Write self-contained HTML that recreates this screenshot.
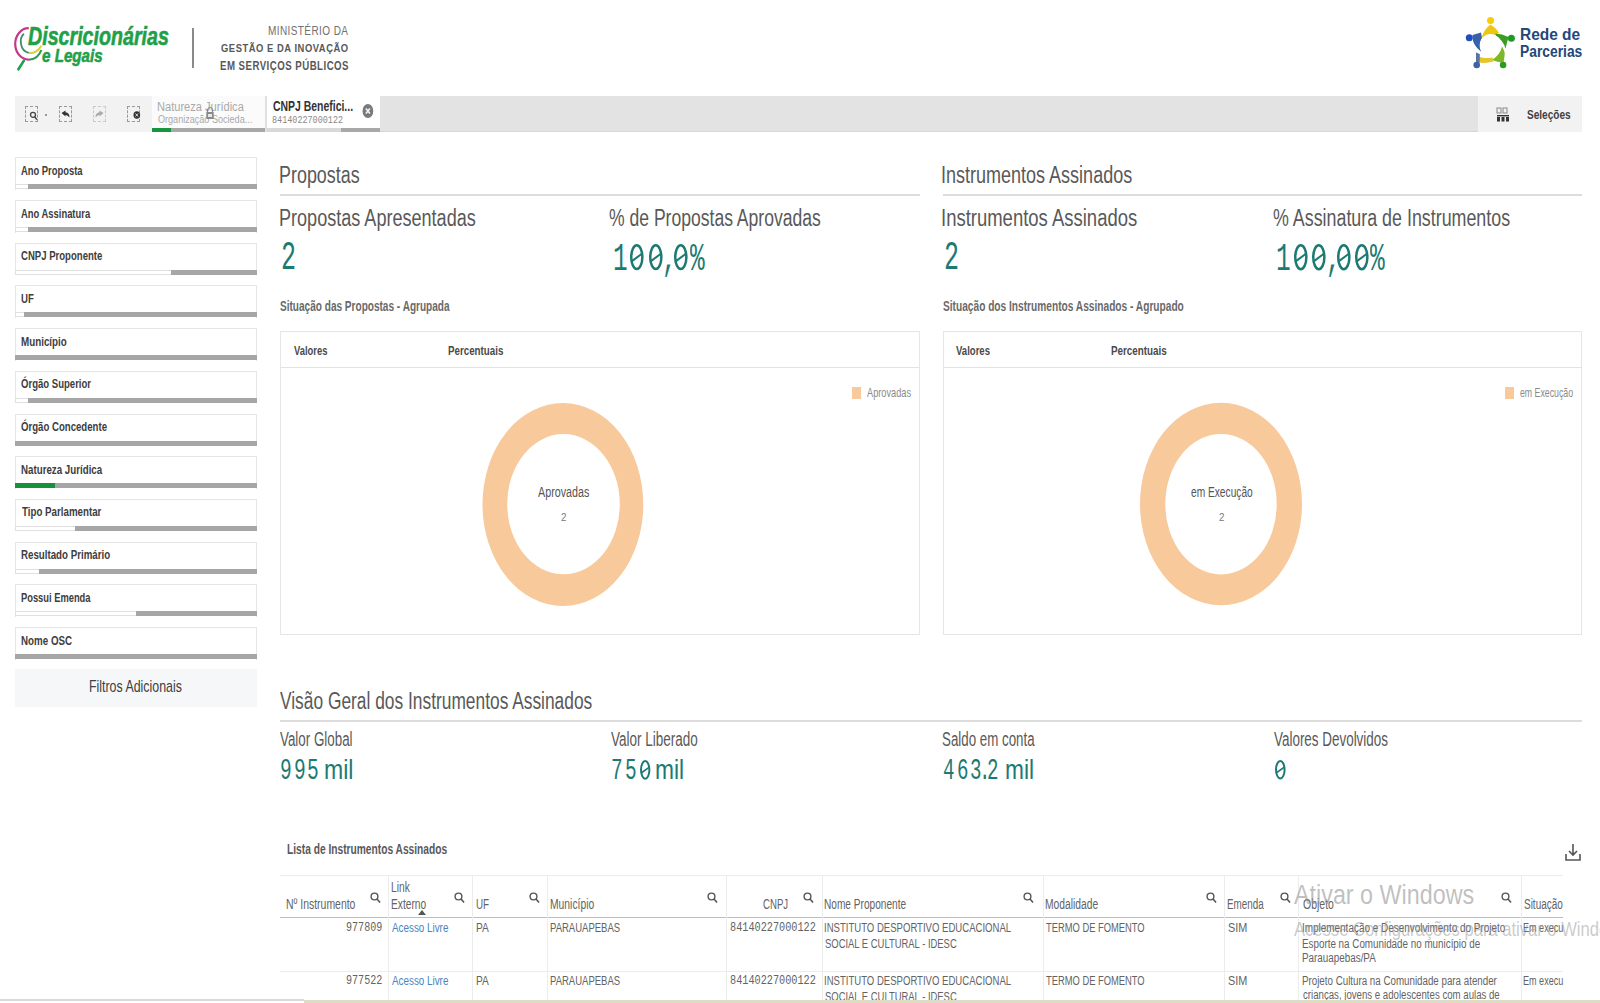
<!DOCTYPE html>
<html><head><meta charset="utf-8"><style>
html,body{margin:0;padding:0;width:1600px;height:1003px;overflow:hidden;background:#fff;}
body{position:relative;font-family:"Liberation Sans",sans-serif;}
.t{position:absolute;white-space:nowrap;transform-origin:0 0;}
.r{position:absolute;box-sizing:border-box;}
svg{position:absolute;}
</style></head><body>
<svg style="left:10px;top:24px" width="40" height="50" viewBox="0 0 40 50">
<path d="M18.8 4.2 A13.3 15.7 0 1 0 20 35.5" fill="none" stroke="#c2388a" stroke-width="2.2"/>
<path d="M20 35.5 A13.3 15.7 0 0 0 31.3 26" fill="none" stroke="#2e9a5e" stroke-width="2.2"/>
<path d="M13.9 9.7 C9 14 9.5 27 18.8 28.9" fill="none" stroke="#3a8f6a" stroke-width="1.8"/>
<path d="M18.8 28.9 C24 30 29 26 31.4 21.8" fill="none" stroke="#d6d23a" stroke-width="2"/>
<path d="M13.9 36.6 L8.4 45.3" stroke="#22a04b" stroke-width="2.6" stroke-linecap="round"/>
</svg>
<div class="t" style="left:27.71px;top:23.25px;font:italic bold 26.16px/26.16px 'Liberation Sans';color:#1fa049;transform:scaleX(0.7510);-webkit-text-stroke:0.6px #1fa049">Discricionárias</div>
<div class="t" style="left:41.55px;top:47.40px;font:italic bold 18.90px/18.90px 'Liberation Sans';color:#1fa049;transform:scaleX(0.8019);-webkit-text-stroke:0.6px #1fa049">e Legais</div>
<div class="r" style="left:192px;top:28px;width:1.6px;height:40px;background:#8a8a8a;"></div>
<div class="t" style="left:268.00px;top:24.86px;font:normal normal 12.21px/12.21px 'Liberation Sans';color:#707070;transform:scaleX(0.8199);letter-spacing:0.50px;">MINISTÉRIO DA</div>
<div class="t" style="left:221.22px;top:43.12px;font:normal bold 10.61px/10.61px 'Liberation Sans';color:#585858;transform:scaleX(0.8861);letter-spacing:0.60px;">GESTÃO E DA INOVAÇÃO</div>
<div class="t" style="left:219.77px;top:59.76px;font:normal bold 12.21px/12.21px 'Liberation Sans';color:#585858;transform:scaleX(0.7915);letter-spacing:0.60px;">EM SERVIÇOS PÚBLICOS</div>
<svg style="left:1462px;top:14px" width="58" height="58" viewBox="0 0 58 58">
<path d="M28.5 10.5 Q33 13 37 18.5 L33 21 Q26 20 19.5 24 Q22 15 28.5 10.5 Z" fill="#ecc815"/>
<circle cx="28.5" cy="6.6" r="3.5" fill="#f5cd0a"/>
<path d="M10.5 21 L19 18.5 L20 24 Q16.5 30 19.5 38 Q13 33 11 27 Z" fill="#3562a8"/>
<circle cx="7.3" cy="23.7" r="3.5" fill="#1f4fbf"/>
<path d="M33.5 19.5 Q40 19.5 46.5 23 L43.5 34.5 Q41 26 33.5 21.5 Z" fill="#3d9d22"/>
<circle cx="49.4" cy="24.3" r="3.5" fill="#1f9a24"/>
<path d="M40 32.5 Q43.5 38 42.5 42 L41.5 49 Q35 48 30 46 Q38 41 40 32.5 Z" fill="#7db828"/>
<circle cx="41.1" cy="51" r="3.3" fill="#2f9a22"/>
<path d="M16.5 42.5 Q23 45 30.5 43.5 L31.5 47.5 Q25 49 18.5 49 Z" fill="#e5c42a"/>
<path d="M14 38.5 L17.8 40 L17.8 48.8 L14 48.8 Z" fill="#5676a0"/>
<circle cx="14.7" cy="51" r="3.3" fill="#3d62a6"/>
<ellipse cx="28.5" cy="31.5" rx="10.8" ry="11.5" fill="#fff"/>
</svg>
<div class="t" style="left:1519.99px;top:27.35px;font:normal bold 16.72px/16.72px 'Liberation Sans';color:#24477a;transform:scaleX(0.9254);">Rede de</div>
<div class="t" style="left:1520.10px;top:43.29px;font:normal bold 16.42px/16.42px 'Liberation Sans';color:#24477a;transform:scaleX(0.8431);">Parcerias</div>
<div class="r" style="left:15px;top:96px;width:1567px;height:36px;background:#e3e3e3;"></div>
<div class="r" style="left:15px;top:96px;width:137px;height:36px;background:#f2f2f2;"></div>
<div class="r" style="left:1478px;top:96px;width:104px;height:36px;background:#f2f2f2;"></div>
<div class="r" style="left:380px;top:130.5px;width:1098px;height:1.5px;background:#d6d6d6;"></div>
<div class="r" style="left:152px;top:96px;width:113px;height:36px;background:#fbfbfb;"></div>
<div class="r" style="left:267px;top:96px;width:113px;height:36px;background:#ffffff;"></div>
<div class="r" style="left:152px;top:128px;width:113px;height:3.6px;background:#a8a8a8;"></div>
<div class="r" style="left:152px;top:128px;width:19px;height:3.6px;background:#17963f;"></div>
<div class="r" style="left:267px;top:128px;width:74px;height:3.6px;background:#d9d9d9;"></div>
<div class="r" style="left:341px;top:128px;width:39px;height:3.6px;background:#a8a8a8;"></div>
<div class="r" style="left:265px;top:96px;width:2px;height:36px;background:#e0e0e0;"></div>
<div class="r" style="left:25px;top:106px;width:13px;height:15.5px;border:1.6px dashed #8a8a8a;opacity:0.85"></div>
<div class="r" style="left:59px;top:106px;width:13px;height:15.5px;border:1.6px dashed #8a8a8a;opacity:0.85"></div>
<div class="r" style="left:93px;top:106px;width:13px;height:15.5px;border:1.6px dashed #c4c4c4;opacity:0.85"></div>
<div class="r" style="left:127px;top:106px;width:13px;height:15.5px;border:1.6px dashed #8a8a8a;opacity:0.85"></div>
<svg style="left:28px;top:109px" width="10" height="12"><circle cx="5" cy="5.8" r="2.5" fill="none" stroke="#444" stroke-width="1.3"/><path d="M6.6 7.6 L8.8 10.6" stroke="#444" stroke-width="1.5"/></svg>
<div class="r" style="left:45px;top:113.5px;width:2px;height:2px;background:#999;"></div>
<svg style="left:60px;top:109px" width="11" height="10"><path d="M1.5 4 L5.5 1.5 L5.5 3.3 Q9.5 3.5 9.5 8.5 Q7.5 5.8 5.5 6 L5.5 7.5 Z" fill="#333"/></svg>
<svg style="left:94px;top:109px" width="11" height="10"><path d="M9.5 4 L5.5 1.5 L5.5 3.3 Q1.5 3.5 1.5 8.5 Q3.5 5.8 5.5 6 L5.5 7.5 Z" fill="#aaa"/></svg>
<svg style="left:131px;top:110px" width="11" height="10"><ellipse cx="5.8" cy="5" rx="3.3" ry="3.8" fill="#333"/><path d="M4.5 3.5 L7.1 6.5 M7.1 3.5 L4.5 6.5" stroke="#ddd" stroke-width="1"/></svg>
<div class="t" style="left:157.11px;top:100.33px;font:normal normal 13.66px/13.66px 'Liberation Sans';color:#a9a9a9;transform:scaleX(0.8111);">Natureza Jurídica</div>
<div class="t" style="left:157.59px;top:114.25px;font:normal normal 11.05px/11.05px 'Liberation Sans';color:#a9a9a9;transform:scaleX(0.8206);">Organização Socieda...</div>
<svg style="left:205px;top:104px" width="10" height="20"><path d="M2.5 8 L2.5 5.5 Q5 1 7.5 5.5 L7.5 8" fill="none" stroke="#8a8a8a" stroke-width="1.2"/><rect x="1.3" y="8" width="7.4" height="7" fill="#8a8a8a"/><rect x="3" y="10" width="4" height="3" fill="#e8e8e8"/></svg>
<div class="t" style="left:272.58px;top:100.31px;font:normal bold 13.81px/13.81px 'Liberation Sans';color:#333333;transform:scaleX(0.7568);">CNPJ Benefici...</div>
<div class="t" style="left:272.49px;top:115.47px;font:normal normal 10.61px/10.61px 'Liberation Mono';color:#8a8a8a;transform:scaleX(0.7976);">84140227000122</div>
<svg style="left:361px;top:103px" width="14" height="16"><ellipse cx="6.9" cy="8" rx="5.4" ry="7" fill="#7a7a7a"/><path d="M4.9 5.6 L8.9 10.4 M8.9 5.6 L4.9 10.4" stroke="#f4f4f4" stroke-width="1.6"/></svg>
<svg style="left:1496px;top:107px" width="14" height="16"><rect x="1" y="1" width="4" height="5" fill="none" stroke="#888" stroke-width="1"/><rect x="7" y="1" width="4" height="5" fill="none" stroke="#888" stroke-width="1"/><rect x="1" y="8" width="12" height="1.4" fill="#333"/><rect x="1" y="10" width="3" height="4.5" fill="#333"/><rect x="5.5" y="10" width="3" height="4.5" fill="#333"/><rect x="10" y="10" width="3" height="4.5" fill="#333"/></svg>
<div class="t" style="left:1526.75px;top:107.55px;font:normal bold 13.52px/13.52px 'Liberation Sans';color:#404040;transform:scaleX(0.7441);">Seleções</div>
<div class="r" style="left:15px;top:157.3px;width:242px;height:32.5px;border:1.6px solid #e6e6e6;border-bottom:none;background:#fff"></div>
<div class="r" style="left:15px;top:184.3px;width:242px;height:5px;background:#a6a6a6;"></div>
<div class="r" style="left:15px;top:184.3px;width:13.4px;height:5px;background:#fff;border:1px solid #e0e0e0;border-right:none"></div>
<div class="t" style="left:21.37px;top:164.87px;font:normal bold 12.79px/12.79px 'Liberation Sans';color:#3d3d3d;transform:scaleX(0.7340);">Ano Proposta</div>
<div class="r" style="left:15px;top:200.0px;width:242px;height:32.5px;border:1.6px solid #e6e6e6;border-bottom:none;background:#fff"></div>
<div class="r" style="left:15px;top:227.0px;width:242px;height:5px;background:#a6a6a6;"></div>
<div class="r" style="left:15px;top:227.0px;width:12.5px;height:5px;background:#fff;border:1px solid #e0e0e0;border-right:none"></div>
<div class="t" style="left:21.36px;top:207.57px;font:normal bold 12.79px/12.79px 'Liberation Sans';color:#3d3d3d;transform:scaleX(0.7355);">Ano Assinatura</div>
<div class="r" style="left:15px;top:242.7px;width:242px;height:32.5px;border:1.6px solid #e6e6e6;border-bottom:none;background:#fff"></div>
<div class="r" style="left:15px;top:269.7px;width:242px;height:5px;background:#a6a6a6;"></div>
<div class="r" style="left:15px;top:269.7px;width:155.5px;height:5px;background:#fff;border:1px solid #e0e0e0;border-right:none"></div>
<div class="t" style="left:21.22px;top:250.27px;font:normal bold 12.79px/12.79px 'Liberation Sans';color:#3d3d3d;transform:scaleX(0.7484);">CNPJ Proponente</div>
<div class="r" style="left:15px;top:285.4px;width:242px;height:32.5px;border:1.6px solid #e6e6e6;border-bottom:none;background:#fff"></div>
<div class="r" style="left:15px;top:312.4px;width:242px;height:5px;background:#a6a6a6;"></div>
<div class="r" style="left:15px;top:312.4px;width:9.0px;height:5px;background:#fff;border:1px solid #e0e0e0;border-right:none"></div>
<div class="t" style="left:21.02px;top:292.97px;font:normal bold 12.79px/12.79px 'Liberation Sans';color:#3d3d3d;transform:scaleX(0.7533);">UF</div>
<div class="r" style="left:15px;top:328.1px;width:242px;height:32.5px;border:1.6px solid #e6e6e6;border-bottom:none;background:#fff"></div>
<div class="r" style="left:15px;top:355.1px;width:242px;height:5px;background:#a6a6a6;"></div>
<div class="t" style="left:20.96px;top:335.67px;font:normal bold 12.79px/12.79px 'Liberation Sans';color:#3d3d3d;transform:scaleX(0.7673);">Município</div>
<div class="r" style="left:15px;top:370.8px;width:242px;height:32.5px;border:1.6px solid #e6e6e6;border-bottom:none;background:#fff"></div>
<div class="r" style="left:15px;top:397.8px;width:242px;height:5px;background:#a6a6a6;"></div>
<div class="r" style="left:15px;top:397.8px;width:12.5px;height:5px;background:#fff;border:1px solid #e0e0e0;border-right:none"></div>
<div class="t" style="left:21.22px;top:378.37px;font:normal bold 12.79px/12.79px 'Liberation Sans';color:#3d3d3d;transform:scaleX(0.7475);">Órgão Superior</div>
<div class="r" style="left:15px;top:413.5px;width:242px;height:32.5px;border:1.6px solid #e6e6e6;border-bottom:none;background:#fff"></div>
<div class="r" style="left:15px;top:440.5px;width:242px;height:5px;background:#a6a6a6;"></div>
<div class="t" style="left:21.22px;top:421.07px;font:normal bold 12.79px/12.79px 'Liberation Sans';color:#3d3d3d;transform:scaleX(0.7523);">Órgão Concedente</div>
<div class="r" style="left:15px;top:456.2px;width:242px;height:32.5px;border:1.6px solid #e6e6e6;border-bottom:none;background:#fff"></div>
<div class="r" style="left:15px;top:483.2px;width:242px;height:5px;background:#a6a6a6;"></div>
<div class="r" style="left:15px;top:483.2px;width:40px;height:5px;background:#17913c;"></div>
<div class="t" style="left:20.97px;top:463.77px;font:normal bold 12.79px/12.79px 'Liberation Sans';color:#3d3d3d;transform:scaleX(0.7620);">Natureza Jurídica</div>
<div class="r" style="left:15px;top:498.9px;width:242px;height:32.5px;border:1.6px solid #e6e6e6;border-bottom:none;background:#fff"></div>
<div class="r" style="left:15px;top:525.9px;width:242px;height:5px;background:#a6a6a6;"></div>
<div class="r" style="left:15px;top:525.9px;width:60.0px;height:5px;background:#fff;border:1px solid #e0e0e0;border-right:none"></div>
<div class="t" style="left:21.50px;top:506.47px;font:normal bold 12.79px/12.79px 'Liberation Sans';color:#3d3d3d;transform:scaleX(0.7621);">Tipo Parlamentar</div>
<div class="r" style="left:15px;top:541.6px;width:242px;height:32.5px;border:1.6px solid #e6e6e6;border-bottom:none;background:#fff"></div>
<div class="r" style="left:15px;top:568.6px;width:242px;height:5px;background:#a6a6a6;"></div>
<div class="r" style="left:15px;top:568.6px;width:24.0px;height:5px;background:#fff;border:1px solid #e0e0e0;border-right:none"></div>
<div class="t" style="left:20.97px;top:549.17px;font:normal bold 12.79px/12.79px 'Liberation Sans';color:#3d3d3d;transform:scaleX(0.7603);">Resultado Primário</div>
<div class="r" style="left:15px;top:584.3px;width:242px;height:32.5px;border:1.6px solid #e6e6e6;border-bottom:none;background:#fff"></div>
<div class="r" style="left:15px;top:611.3px;width:242px;height:5px;background:#a6a6a6;"></div>
<div class="r" style="left:15px;top:611.3px;width:120.5px;height:5px;background:#fff;border:1px solid #e0e0e0;border-right:none"></div>
<div class="t" style="left:20.99px;top:591.87px;font:normal bold 12.79px/12.79px 'Liberation Sans';color:#3d3d3d;transform:scaleX(0.7300);">Possui Emenda</div>
<div class="r" style="left:15px;top:627.0px;width:242px;height:32.5px;border:1.6px solid #e6e6e6;border-bottom:none;background:#fff"></div>
<div class="r" style="left:15px;top:654.0px;width:242px;height:5px;background:#a6a6a6;"></div>
<div class="t" style="left:20.96px;top:634.57px;font:normal bold 12.79px/12.79px 'Liberation Sans';color:#3d3d3d;transform:scaleX(0.7651);">Nome OSC</div>
<div class="r" style="left:15px;top:669px;width:242px;height:37.5px;background:#f6f7f8;"></div>
<div class="t" style="left:88.51px;top:679.46px;font:normal normal 15.99px/15.99px 'Liberation Sans';color:#404040;transform:scaleX(0.7744);">Filtros Adicionais</div>
<div class="t" style="left:278.57px;top:163.49px;font:normal normal 23.98px/23.98px 'Liberation Sans';color:#595959;transform:scaleX(0.7475);">Propostas</div>
<div class="r" style="left:280px;top:194px;width:640px;height:1.5px;background:#dcdcdc;"></div>
<div class="t" style="left:279.35px;top:205.59px;font:normal normal 23.98px/23.98px 'Liberation Sans';color:#595959;transform:scaleX(0.7535);">Propostas Apresentadas</div>
<div class="t" style="left:609.39px;top:205.59px;font:normal normal 23.98px/23.98px 'Liberation Sans';color:#595959;transform:scaleX(0.7324);">% de Propostas Aprovadas</div>
<div class="t" style="left:281.05px;top:239.31px;font:normal normal 40.06px/40.06px 'Liberation Mono';color:#1d7a73;transform:scaleX(0.6241);">2</div>
<div class="t" style="left:612.89px;top:239.78px;font:normal normal 39.31px/39.31px 'Liberation Mono';color:#1d7a73;transform:scaleX(0.6200)">1</div>
<svg style="left:628.40px;top:241.60px;overflow:visible" width="17.60" height="30.30" viewBox="628.40 241.60 17.60 30.30"><ellipse cx="637.20" cy="256.75" rx="5.55" ry="11.90" fill="none" stroke="#1d7a73" stroke-width="2.50"/><path d="M632.03 260.96 L642.64 253.07" stroke="#1d7a73" stroke-width="2.00"/></svg>
<svg style="left:647.00px;top:241.60px;overflow:visible" width="17.60" height="30.30" viewBox="647.00 241.60 17.60 30.30"><ellipse cx="655.80" cy="256.75" rx="5.55" ry="11.90" fill="none" stroke="#1d7a73" stroke-width="2.50"/><path d="M650.63 260.96 L661.24 253.07" stroke="#1d7a73" stroke-width="2.00"/></svg>
<div class="t" style="left:662.25px;top:239.78px;font:normal normal 39.31px/39.31px 'Liberation Mono';color:#1d7a73;transform:scaleX(0.6200)">,</div>
<svg style="left:671.50px;top:241.60px;overflow:visible" width="17.60" height="30.30" viewBox="671.50 241.60 17.60 30.30"><ellipse cx="680.30" cy="256.75" rx="5.55" ry="11.90" fill="none" stroke="#1d7a73" stroke-width="2.50"/><path d="M675.13 260.96 L685.74 253.07" stroke="#1d7a73" stroke-width="2.00"/></svg>
<div class="t" style="left:689.60px;top:239.78px;font:normal normal 39.31px/39.31px 'Liberation Mono';color:#1d7a73;transform:scaleX(0.6200)">%</div>
<div class="t" style="left:279.75px;top:298.20px;font:normal bold 15.12px/15.12px 'Liberation Sans';color:#6a6a6a;transform:scaleX(0.6659);">Situação das Propostas - Agrupada</div>
<div class="r" style="left:280px;top:331px;width:640px;height:304px;border:1.5px solid #e6e6e6"></div>
<div class="r" style="left:281px;top:366.6px;width:638px;height:1.2px;background:#e3e3e3;"></div>
<div class="t" style="left:293.95px;top:343.83px;font:normal bold 13.66px/13.66px 'Liberation Sans';color:#4a4a4a;transform:scaleX(0.6871);">Valores</div>
<div class="t" style="left:447.97px;top:343.83px;font:normal bold 13.66px/13.66px 'Liberation Sans';color:#4a4a4a;transform:scaleX(0.7148);">Percentuais</div>
<svg style="left:470px;top:395px" width="190" height="220"><ellipse cx="93" cy="109.5" rx="68.35" ry="85.75" fill="none" stroke="#f8c99b" stroke-width="0" /></svg>
<svg style="left:0;top:0" width="1600" height="1003"><path fill-rule="evenodd" fill="#f8c99b" d="M482.5 504.5 a80.4 101.5 0 1 0 160.8 0 a80.4 101.5 0 1 0 -160.8 0 Z M507.2 504.2 a56.3 70.1 0 1 0 112.6 0 a56.3 70.1 0 1 0 -112.6 0 Z"/><path fill-rule="evenodd" fill="#f8c99b" d="M1140 504 a81 101.3 0 1 0 162 0 a81 101.3 0 1 0 -162 0 Z M1165.3 504.2 a55.7 70.2 0 1 0 111.4 0 a55.7 70.2 0 1 0 -111.4 0 Z"/></svg>
<div class="r" style="left:851.7px;top:387.3px;width:9px;height:11.5px;background:#f8c99b;"></div>
<div class="t" style="left:867.00px;top:387.04px;font:normal normal 12.35px/12.35px 'Liberation Sans';color:#8a8a8a;transform:scaleX(0.7454);">Aprovadas</div>
<div class="t" style="left:538.00px;top:485.19px;font:normal normal 14.53px/14.53px 'Liberation Sans';color:#555555;transform:scaleX(0.7395);">Aprovadas</div>
<div class="t" style="left:561.01px;top:513.39px;font:normal normal 10.17px/10.17px 'Liberation Sans';color:#777777;transform:scaleX(0.9615);">2</div>
<div class="t" style="left:941.38px;top:163.49px;font:normal normal 23.98px/23.98px 'Liberation Sans';color:#595959;transform:scaleX(0.7513);">Instrumentos Assinados</div>
<div class="r" style="left:943px;top:194px;width:639px;height:1.5px;background:#dcdcdc;"></div>
<div class="t" style="left:941.34px;top:205.59px;font:normal normal 23.98px/23.98px 'Liberation Sans';color:#595959;transform:scaleX(0.7711);">Instrumentos Assinados</div>
<div class="t" style="left:1273.37px;top:205.59px;font:normal normal 23.98px/23.98px 'Liberation Sans';color:#595959;transform:scaleX(0.7446);">% Assinatura de Instrumentos</div>
<div class="t" style="left:943.75px;top:239.31px;font:normal normal 40.06px/40.06px 'Liberation Mono';color:#1d7a73;transform:scaleX(0.6241);">2</div>
<div class="t" style="left:1276.29px;top:239.67px;font:normal normal 39.46px/39.46px 'Liberation Mono';color:#1d7a73;transform:scaleX(0.6200)">1</div>
<svg style="left:1291.80px;top:241.50px;overflow:visible" width="17.60" height="30.40" viewBox="1291.80 241.50 17.60 30.40"><ellipse cx="1300.60" cy="256.70" rx="5.55" ry="11.95" fill="none" stroke="#1d7a73" stroke-width="2.50"/><path d="M1295.43 260.92 L1306.04 253.00" stroke="#1d7a73" stroke-width="2.00"/></svg>
<svg style="left:1310.10px;top:241.50px;overflow:visible" width="17.60" height="30.40" viewBox="1310.10 241.50 17.60 30.40"><ellipse cx="1318.90" cy="256.70" rx="5.55" ry="11.95" fill="none" stroke="#1d7a73" stroke-width="2.50"/><path d="M1313.73 260.92 L1324.34 253.00" stroke="#1d7a73" stroke-width="2.00"/></svg>
<div class="t" style="left:1325.74px;top:239.67px;font:normal normal 39.46px/39.46px 'Liberation Mono';color:#1d7a73;transform:scaleX(0.6200)">,</div>
<svg style="left:1334.50px;top:241.50px;overflow:visible" width="17.60" height="30.40" viewBox="1334.50 241.50 17.60 30.40"><ellipse cx="1343.30" cy="256.70" rx="5.55" ry="11.95" fill="none" stroke="#1d7a73" stroke-width="2.50"/><path d="M1338.13 260.92 L1348.74 253.00" stroke="#1d7a73" stroke-width="2.00"/></svg>
<svg style="left:1352.80px;top:241.50px;overflow:visible" width="17.60" height="30.40" viewBox="1352.80 241.50 17.60 30.40"><ellipse cx="1361.60" cy="256.70" rx="5.55" ry="11.95" fill="none" stroke="#1d7a73" stroke-width="2.50"/><path d="M1356.43 260.92 L1367.04 253.00" stroke="#1d7a73" stroke-width="2.00"/></svg>
<div class="t" style="left:1370.20px;top:239.67px;font:normal normal 39.46px/39.46px 'Liberation Mono';color:#1d7a73;transform:scaleX(0.6200)">%</div>
<div class="t" style="left:942.75px;top:298.20px;font:normal bold 15.12px/15.12px 'Liberation Sans';color:#6a6a6a;transform:scaleX(0.6723);">Situação dos Instrumentos Assinados - Agrupado</div>
<div class="r" style="left:943px;top:331px;width:639px;height:304px;border:1.5px solid #e6e6e6"></div>
<div class="r" style="left:944px;top:366.6px;width:637px;height:1.2px;background:#e3e3e3;"></div>
<div class="t" style="left:956.35px;top:343.83px;font:normal bold 13.66px/13.66px 'Liberation Sans';color:#4a4a4a;transform:scaleX(0.6996);">Valores</div>
<div class="t" style="left:1110.66px;top:343.83px;font:normal bold 13.66px/13.66px 'Liberation Sans';color:#4a4a4a;transform:scaleX(0.7188);">Percentuais</div>
<div class="r" style="left:1504.5px;top:387.3px;width:9px;height:11.5px;background:#f8c99b;"></div>
<div class="t" style="left:1520.05px;top:387.04px;font:normal normal 12.35px/12.35px 'Liberation Sans';color:#8a8a8a;transform:scaleX(0.7093);">em Execução</div>
<div class="t" style="left:1190.59px;top:485.19px;font:normal normal 14.53px/14.53px 'Liberation Sans';color:#555555;transform:scaleX(0.7018);">em Execução</div>
<div class="t" style="left:1219.01px;top:513.39px;font:normal normal 10.17px/10.17px 'Liberation Sans';color:#777777;transform:scaleX(0.9615);">2</div>
<div class="t" style="left:280.00px;top:688.89px;font:normal normal 23.98px/23.98px 'Liberation Sans';color:#595959;transform:scaleX(0.7241);">Visão Geral dos Instrumentos Assinados</div>
<div class="r" style="left:280px;top:720px;width:1302px;height:1.5px;background:#dcdcdc;"></div>
<div class="t" style="left:280.00px;top:729.56px;font:normal normal 19.77px/19.77px 'Liberation Sans';color:#595959;transform:scaleX(0.6761);">Valor Global</div>
<div class="t" style="left:610.80px;top:729.56px;font:normal normal 19.77px/19.77px 'Liberation Sans';color:#595959;transform:scaleX(0.6824);">Valor Liberado</div>
<div class="t" style="left:942.00px;top:729.56px;font:normal normal 19.77px/19.77px 'Liberation Sans';color:#595959;transform:scaleX(0.6743);">Saldo em conta</div>
<div class="t" style="left:1274.20px;top:729.56px;font:normal normal 19.77px/19.77px 'Liberation Sans';color:#595959;transform:scaleX(0.6795);">Valores Devolvidos</div>
<div class="t" style="left:280.23px;top:756.93px;font:normal normal 29.60px/29.60px 'Liberation Mono';color:#1d7a73;transform:scaleX(0.6600)">9</div>
<div class="t" style="left:293.73px;top:756.93px;font:normal normal 29.60px/29.60px 'Liberation Mono';color:#1d7a73;transform:scaleX(0.6600)">9</div>
<div class="t" style="left:307.03px;top:756.93px;font:normal normal 29.60px/29.60px 'Liberation Mono';color:#1d7a73;transform:scaleX(0.6600)">5</div>
<div class="t" style="left:323.50px;top:756.90px;font:normal normal 26.82px/26.82px 'Liberation Sans';color:#1d7a73;transform:scaleX(0.8593);">mil</div>
<div class="t" style="left:611.14px;top:757.04px;font:normal normal 29.45px/29.45px 'Liberation Mono';color:#1d7a73;transform:scaleX(0.6600)">7</div>
<div class="t" style="left:625.23px;top:757.04px;font:normal normal 29.45px/29.45px 'Liberation Mono';color:#1d7a73;transform:scaleX(0.6600)">5</div>
<svg style="left:637.60px;top:757.90px;overflow:visible" width="14.40" height="23.70" viewBox="637.60 757.90 14.40 23.70"><ellipse cx="644.80" cy="769.75" rx="4.20" ry="8.85" fill="none" stroke="#1d7a73" stroke-width="2.00"/><path d="M640.85 772.90 L648.96 766.99" stroke="#1d7a73" stroke-width="1.60"/></svg>
<div class="t" style="left:655.22px;top:756.90px;font:normal normal 26.82px/26.82px 'Liberation Sans';color:#1d7a73;transform:scaleX(0.8496);">mil</div>
<div class="t" style="left:943.04px;top:757.18px;font:normal normal 29.00px/29.00px 'Liberation Mono';color:#1d7a73;transform:scaleX(0.6600)">4</div>
<div class="t" style="left:957.06px;top:757.18px;font:normal normal 29.00px/29.00px 'Liberation Mono';color:#1d7a73;transform:scaleX(0.6600)">6</div>
<div class="t" style="left:969.65px;top:757.18px;font:normal normal 29.00px/29.00px 'Liberation Mono';color:#1d7a73;transform:scaleX(0.6600)">3</div>
<div class="t" style="left:979.31px;top:757.18px;font:normal normal 29.00px/29.00px 'Liberation Mono';color:#1d7a73;transform:scaleX(0.6600)">.</div>
<div class="t" style="left:987.06px;top:757.18px;font:normal normal 29.00px/29.00px 'Liberation Mono';color:#1d7a73;transform:scaleX(0.6600)">2</div>
<div class="t" style="left:1004.72px;top:756.70px;font:normal normal 26.82px/26.82px 'Liberation Sans';color:#1d7a73;transform:scaleX(0.8464);">mil</div>
<svg style="left:1272.50px;top:758.00px;overflow:visible" width="14.60" height="23.40" viewBox="1272.50 758.00 14.60 23.40"><ellipse cx="1279.80" cy="769.70" rx="4.30" ry="8.70" fill="none" stroke="#1d7a73" stroke-width="2.00"/><path d="M1275.77 772.80 L1284.04 766.98" stroke="#1d7a73" stroke-width="1.60"/></svg>
<div class="t" style="left:286.84px;top:841.38px;font:normal bold 15.26px/15.26px 'Liberation Sans';color:#595959;transform:scaleX(0.6695);">Lista de Instrumentos Assinados</div>
<svg style="left:1564px;top:843px" width="18" height="20"><path d="M9 1 L9 12 M5 8 L9 12 L13 8 M2 11 L2 17 L16 17 L16 11" fill="none" stroke="#555" stroke-width="1.6"/></svg>
<div class="r" style="left:280px;top:875px;width:1283px;height:1px;background:#ececec;"></div>
<div class="r" style="left:280px;top:916.8px;width:1283px;height:1.5px;background:#bdbdbd;"></div>
<div class="r" style="left:280px;top:970.8px;width:1283px;height:1px;background:#ececec;"></div>
<div class="r" style="left:388px;top:876px;width:1px;height:127px;background:#ececec;"></div>
<div class="r" style="left:472.3px;top:876px;width:1px;height:127px;background:#ececec;"></div>
<div class="r" style="left:547.2px;top:876px;width:1px;height:127px;background:#ececec;"></div>
<div class="r" style="left:725.7px;top:876px;width:1px;height:127px;background:#ececec;"></div>
<div class="r" style="left:822.3px;top:876px;width:1px;height:127px;background:#ececec;"></div>
<div class="r" style="left:1043px;top:876px;width:1px;height:127px;background:#ececec;"></div>
<div class="r" style="left:1224.4px;top:876px;width:1px;height:127px;background:#ececec;"></div>
<div class="r" style="left:1298.4px;top:876px;width:1px;height:127px;background:#ececec;"></div>
<div class="r" style="left:1520.5px;top:876px;width:1px;height:127px;background:#ececec;"></div>
<div class="t" style="left:285.96px;top:897.61px;font:normal normal 13.81px/13.81px 'Liberation Sans';color:#636363;transform:scaleX(0.7570);">Nº Instrumento</div>
<div class="t" style="left:476.26px;top:897.61px;font:normal normal 13.81px/13.81px 'Liberation Sans';color:#636363;transform:scaleX(0.7123);">UF</div>
<div class="t" style="left:550.17px;top:897.61px;font:normal normal 13.81px/13.81px 'Liberation Sans';color:#636363;transform:scaleX(0.7486);">Município</div>
<div class="t" style="left:762.52px;top:897.61px;font:normal normal 13.81px/13.81px 'Liberation Sans';color:#636363;transform:scaleX(0.6980);">CNPJ</div>
<div class="t" style="left:824.19px;top:897.61px;font:normal normal 13.81px/13.81px 'Liberation Sans';color:#636363;transform:scaleX(0.7337);">Nome Proponente</div>
<div class="t" style="left:1045.18px;top:897.61px;font:normal normal 13.81px/13.81px 'Liberation Sans';color:#636363;transform:scaleX(0.7457);">Modalidade</div>
<div class="t" style="left:1227.21px;top:897.61px;font:normal normal 13.81px/13.81px 'Liberation Sans';color:#636363;transform:scaleX(0.7143);">Emenda</div>
<div class="t" style="left:1302.53px;top:897.61px;font:normal normal 13.81px/13.81px 'Liberation Sans';color:#636363;transform:scaleX(0.7597);">Objeto</div>
<div class="t" style="left:1523.55px;top:897.61px;font:normal normal 13.81px/13.81px 'Liberation Sans';color:#636363;transform:scaleX(0.7233);">Situação</div>
<div class="t" style="left:391.18px;top:881.31px;font:normal normal 13.81px/13.81px 'Liberation Sans';color:#636363;transform:scaleX(0.7407);">Link</div>
<div class="t" style="left:391.18px;top:897.61px;font:normal normal 13.81px/13.81px 'Liberation Sans';color:#636363;transform:scaleX(0.7405);">Externo</div>
<svg style="left:418px;top:909px" width="8" height="6"><path d="M0 6 L4 1 L8 6 Z" fill="#555"/></svg>
<svg style="left:370px;top:892px" width="11" height="12"><circle cx="4.5" cy="4.5" r="3.4" fill="none" stroke="#555" stroke-width="1.4"/><path d="M7 7 L10 10.5" stroke="#555" stroke-width="1.6"/></svg>
<svg style="left:454px;top:892px" width="11" height="12"><circle cx="4.5" cy="4.5" r="3.4" fill="none" stroke="#555" stroke-width="1.4"/><path d="M7 7 L10 10.5" stroke="#555" stroke-width="1.6"/></svg>
<svg style="left:529px;top:892px" width="11" height="12"><circle cx="4.5" cy="4.5" r="3.4" fill="none" stroke="#555" stroke-width="1.4"/><path d="M7 7 L10 10.5" stroke="#555" stroke-width="1.6"/></svg>
<svg style="left:707px;top:892px" width="11" height="12"><circle cx="4.5" cy="4.5" r="3.4" fill="none" stroke="#555" stroke-width="1.4"/><path d="M7 7 L10 10.5" stroke="#555" stroke-width="1.6"/></svg>
<svg style="left:803px;top:892px" width="11" height="12"><circle cx="4.5" cy="4.5" r="3.4" fill="none" stroke="#555" stroke-width="1.4"/><path d="M7 7 L10 10.5" stroke="#555" stroke-width="1.6"/></svg>
<svg style="left:1023px;top:892px" width="11" height="12"><circle cx="4.5" cy="4.5" r="3.4" fill="none" stroke="#555" stroke-width="1.4"/><path d="M7 7 L10 10.5" stroke="#555" stroke-width="1.6"/></svg>
<svg style="left:1206px;top:892px" width="11" height="12"><circle cx="4.5" cy="4.5" r="3.4" fill="none" stroke="#555" stroke-width="1.4"/><path d="M7 7 L10 10.5" stroke="#555" stroke-width="1.6"/></svg>
<svg style="left:1280px;top:892px" width="11" height="12"><circle cx="4.5" cy="4.5" r="3.4" fill="none" stroke="#555" stroke-width="1.4"/><path d="M7 7 L10 10.5" stroke="#555" stroke-width="1.6"/></svg>
<svg style="left:1501px;top:892px" width="11" height="12"><circle cx="4.5" cy="4.5" r="3.4" fill="none" stroke="#555" stroke-width="1.4"/><path d="M7 7 L10 10.5" stroke="#555" stroke-width="1.6"/></svg>
<div class="t" style="left:346.34px;top:922.27px;font:normal normal 12.71px/12.71px 'Liberation Mono';color:#636363;transform:scaleX(0.7939);">977809</div>
<div class="t" style="left:392.00px;top:920.92px;font:normal normal 13.08px/13.08px 'Liberation Sans';color:#4a84c2;transform:scaleX(0.7530);">Acesso Livre</div>
<div class="t" style="left:476.19px;top:920.92px;font:normal normal 13.08px/13.08px 'Liberation Sans';color:#636363;transform:scaleX(0.7774);">PA</div>
<div class="t" style="left:550.24px;top:920.92px;font:normal normal 13.08px/13.08px 'Liberation Sans';color:#636363;transform:scaleX(0.7275);">PARAUAPEBAS</div>
<div class="t" style="left:729.89px;top:922.27px;font:normal normal 12.71px/12.71px 'Liberation Mono';color:#636363;transform:scaleX(0.8042);">84140227000122</div>
<div class="t" style="left:824.14px;top:920.92px;font:normal normal 13.08px/13.08px 'Liberation Sans';color:#636363;transform:scaleX(0.7308);">INSTITUTO DESPORTIVO EDUCACIONAL</div>
<div class="t" style="left:824.58px;top:936.62px;font:normal normal 13.08px/13.08px 'Liberation Sans';color:#636363;transform:scaleX(0.7212);">SOCIAL E CULTURAL - IDESC</div>
<div class="t" style="left:1045.81px;top:920.92px;font:normal normal 13.08px/13.08px 'Liberation Sans';color:#636363;transform:scaleX(0.7155);">TERMO DE FOMENTO</div>
<div class="t" style="left:1227.51px;top:920.92px;font:normal normal 13.08px/13.08px 'Liberation Sans';color:#636363;transform:scaleX(0.8314);">SIM</div>
<div class="t" style="left:346.34px;top:975.47px;font:normal normal 12.71px/12.71px 'Liberation Mono';color:#636363;transform:scaleX(0.7950);">977522</div>
<div class="t" style="left:392.00px;top:974.12px;font:normal normal 13.08px/13.08px 'Liberation Sans';color:#4a84c2;transform:scaleX(0.7530);">Acesso Livre</div>
<div class="t" style="left:476.19px;top:974.12px;font:normal normal 13.08px/13.08px 'Liberation Sans';color:#636363;transform:scaleX(0.7774);">PA</div>
<div class="t" style="left:550.24px;top:974.12px;font:normal normal 13.08px/13.08px 'Liberation Sans';color:#636363;transform:scaleX(0.7275);">PARAUAPEBAS</div>
<div class="t" style="left:729.89px;top:975.47px;font:normal normal 12.71px/12.71px 'Liberation Mono';color:#636363;transform:scaleX(0.8042);">84140227000122</div>
<div class="t" style="left:824.14px;top:974.12px;font:normal normal 13.08px/13.08px 'Liberation Sans';color:#636363;transform:scaleX(0.7308);">INSTITUTO DESPORTIVO EDUCACIONAL</div>
<div class="t" style="left:824.58px;top:989.82px;font:normal normal 13.08px/13.08px 'Liberation Sans';color:#636363;transform:scaleX(0.7212);">SOCIAL E CULTURAL - IDESC</div>
<div class="t" style="left:1045.81px;top:974.12px;font:normal normal 13.08px/13.08px 'Liberation Sans';color:#636363;transform:scaleX(0.7155);">TERMO DE FOMENTO</div>
<div class="t" style="left:1227.51px;top:974.12px;font:normal normal 13.08px/13.08px 'Liberation Sans';color:#636363;transform:scaleX(0.8314);">SIM</div>
<div class="t" style="left:1302.11px;top:920.52px;font:normal normal 13.08px/13.08px 'Liberation Sans';color:#636363;transform:scaleX(0.7597);">Implementação e Desenvolvimento do Projeto</div>
<div class="t" style="left:1302.21px;top:937.22px;font:normal normal 13.08px/13.08px 'Liberation Sans';color:#636363;transform:scaleX(0.7517);">Esporte na Comunidade no município de</div>
<div class="t" style="left:1302.21px;top:951.42px;font:normal normal 13.08px/13.08px 'Liberation Sans';color:#636363;transform:scaleX(0.7536);">Parauapebas/PA</div>
<div class="t" style="left:1523.27px;top:920.52px;font:normal normal 13.08px/13.08px 'Liberation Sans';color:#636363;transform:scaleX(0.6933);">Em execu</div>
<div class="t" style="left:1302.22px;top:973.92px;font:normal normal 13.08px/13.08px 'Liberation Sans';color:#636363;transform:scaleX(0.7466);">Projeto Cultura na Comunidade para atender</div>
<div class="t" style="left:1302.61px;top:987.92px;font:normal normal 13.08px/13.08px 'Liberation Sans';color:#636363;transform:scaleX(0.7374);">crianças, jovens e adolescentes com aulas de</div>
<div class="t" style="left:1523.27px;top:973.92px;font:normal normal 13.08px/13.08px 'Liberation Sans';color:#636363;transform:scaleX(0.6933);">Em execu</div>
<div class="t" style="left:1293.60px;top:880.92px;font:normal normal 27.62px/27.62px 'Liberation Sans';color:rgba(150,150,150,0.6);transform:scaleX(0.8448);">Ativar o Windows</div>
<div class="t" style="left:1293.60px;top:919.91px;font:normal normal 19.48px/19.48px 'Liberation Sans';color:rgba(150,150,150,0.5);transform:scaleX(0.8514);">Acesse Configurações para ativar o Windows.</div>
<div class="r" style="left:0px;top:999px;width:304px;height:1.8px;background:#d9d9d9;"></div>
<div class="r" style="left:304px;top:999.6px;width:1296px;height:3.4px;background:#dedcc4;"></div>
</body></html>
